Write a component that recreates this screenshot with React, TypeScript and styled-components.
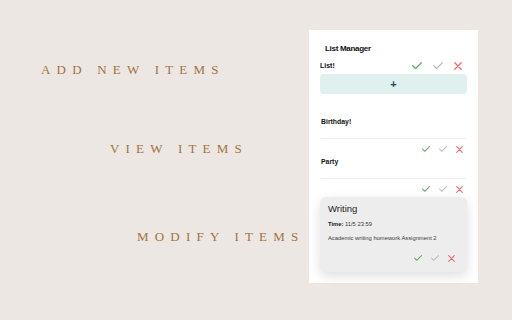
import styled, { createGlobalStyle } from 'styled-components'

const GlobalStyle = createGlobalStyle`
  html, body {
    margin: 0;
    padding: 0;
    background: #ede7e3;
  }
  body {
    font-family: "Liberation Sans", Arial, sans-serif;
  }
`

const Page = styled.div`
  width: 512px;
  height: 320px;
  display: flex;
  padding-top: 30px;
  box-sizing: border-box;
`

const Showcase = styled.div`
  width: 309px;
  display: flex;
  flex-direction: column;
`

const Heading = styled.div<{ $left: number; $top: number }>`
  margin-left: ${p => p.$left}px;
  margin-top: ${p => p.$top}px;
  font-family: "Liberation Serif", "DejaVu Serif", serif;
  font-size: 13px;
  line-height: 16px;
  letter-spacing: 6.2px;
  color: #a2733f;
  white-space: nowrap;
`

const Panel = styled.div`
  width: 169px;
  height: 253px;
  background: #fff;
  padding: 12px 11px 11px;
  box-sizing: border-box;
  display: flex;
  flex-direction: column;
`

const Title = styled.div`
  margin-left: 5px;
  font-size: 8px;
  line-height: 13px;
  font-weight: bold;
  letter-spacing: -0.3px;
  color: #111;
`

const HeaderRow = styled.div`
  margin-top: 4px;
  height: 13px;
  display: flex;
  align-items: center;
  justify-content: space-between;
`

const Label = styled.div`
  font-size: 7px;
  font-weight: 600;
  color: #111;
`

const AddButton = styled.button`
  margin-top: 2px;
  height: 20px;
  border: none;
  border-radius: 4px;
  background: #dff0ef;
  color: #1d4f4a;
  font-family: "Liberation Sans", Arial, sans-serif;
  font-size: 11px;
  font-weight: bold;
  line-height: 20px;
  padding: 0;
`

const List = styled.div`
  margin-top: 22px;
  display: flex;
  flex-direction: column;
  gap: 2px;
`

const Item = styled.div`
  display: flex;
  flex-direction: column;
`

const ItemName = styled.div`
  height: 11px;
  line-height: 11px;
  margin-left: 1px;
  font-size: 6.9px;
  font-weight: 600;
  color: #151515;
`

const Divider = styled.div<{ $top: number; $bottom: number }>`
  height: 1px;
  background: #eeeeee;
  margin: ${p => p.$top}px 1px ${p => p.$bottom}px;
`

const Actions = styled.div<{ $gap: number; $right: number }>`
  height: 10px;
  display: flex;
  align-items: center;
  justify-content: flex-end;
  gap: ${p => p.$gap}px;
  padding-right: ${p => p.$right}px;
`

const Card = styled.div`
  margin-top: 3px;
  height: 75px;
  box-sizing: border-box;
  background: #ededed;
  border-radius: 6px;
  box-shadow: 0 4px 12px rgba(0, 0, 0, 0.13);
  padding: 7px 8px 0;
  display: flex;
  flex-direction: column;
`

const CardTitle = styled.div`
  font-size: 9.5px;
  line-height: 10px;
  color: #222;
`

const CardLine = styled.div`
  margin-top: 6px;
  font-size: 5.8px;
  line-height: 8px;
  color: #3a3a3a;
  white-space: nowrap;
  b {
    color: #222;
  }
`

function Check({ color, w = 10 }: { color: string; w?: number }) {
  return (
    <svg width={w} height={w * 0.75} viewBox="0 0 10 7.5" fill="none">
      <polyline points="0.7,3.8 3.5,6.6 9.3,0.8" stroke={color} strokeWidth="1.3" strokeLinecap="round" strokeLinejoin="round" />
    </svg>
  )
}

function Cross({ color, w = 8 }: { color: string; w?: number }) {
  return (
    <svg width={w} height={w} viewBox="0 0 8 8" fill="none">
      <path d="M0.8 0.8 L7.2 7.2 M7.2 0.8 L0.8 7.2" stroke={color} strokeWidth="1.3" strokeLinecap="round" />
    </svg>
  )
}

const GREEN = '#68a86a'
const GREY = '#bdbdbd'
const RED = '#e96f6f'

function SmallActions({ right }: { right: number }) {
  return (
    <Actions $gap={9} $right={right}>
      <Check color={GREEN} w={8} />
      <Check color={GREY} w={8} />
      <Cross color={RED} w={7} />
    </Actions>
  )
}

const items = ['Birthday!', 'Party']

export default function App() {
  return (
    <>
      <GlobalStyle />
      <Page>
        <Showcase>
          <Heading $left={41} $top={32}>ADD NEW ITEMS</Heading>
          <Heading $left={110} $top={63}>VIEW ITEMS</Heading>
          <Heading $left={137} $top={72}>MODIFY ITEMS</Heading>
        </Showcase>
        <Panel>
          <Title>List Manager</Title>
          <HeaderRow>
            <Label>List!</Label>
            <Actions $gap={11} $right={5}>
              <Check color={GREEN} />
              <Check color={GREY} />
              <Cross color={RED} />
            </Actions>
          </HeaderRow>
          <AddButton>+</AddButton>
          <List>
            {items.map(name => (
              <Item key={name}>
                <ItemName>{name}</ItemName>
                <Divider $top={11} $bottom={5} />
                <SmallActions right={4} />
              </Item>
            ))}
          </List>
          <Card>
            <CardTitle>Writing</CardTitle>
            <CardLine><b>Time:</b> 11/5 23:59</CardLine>
            <CardLine>Academic writing homework Assignment 2</CardLine>
            <Divider $top={5} $bottom={5} />
            <SmallActions right={4} />
          </Card>
        </Panel>
      </Page>
    </>
  )
}
